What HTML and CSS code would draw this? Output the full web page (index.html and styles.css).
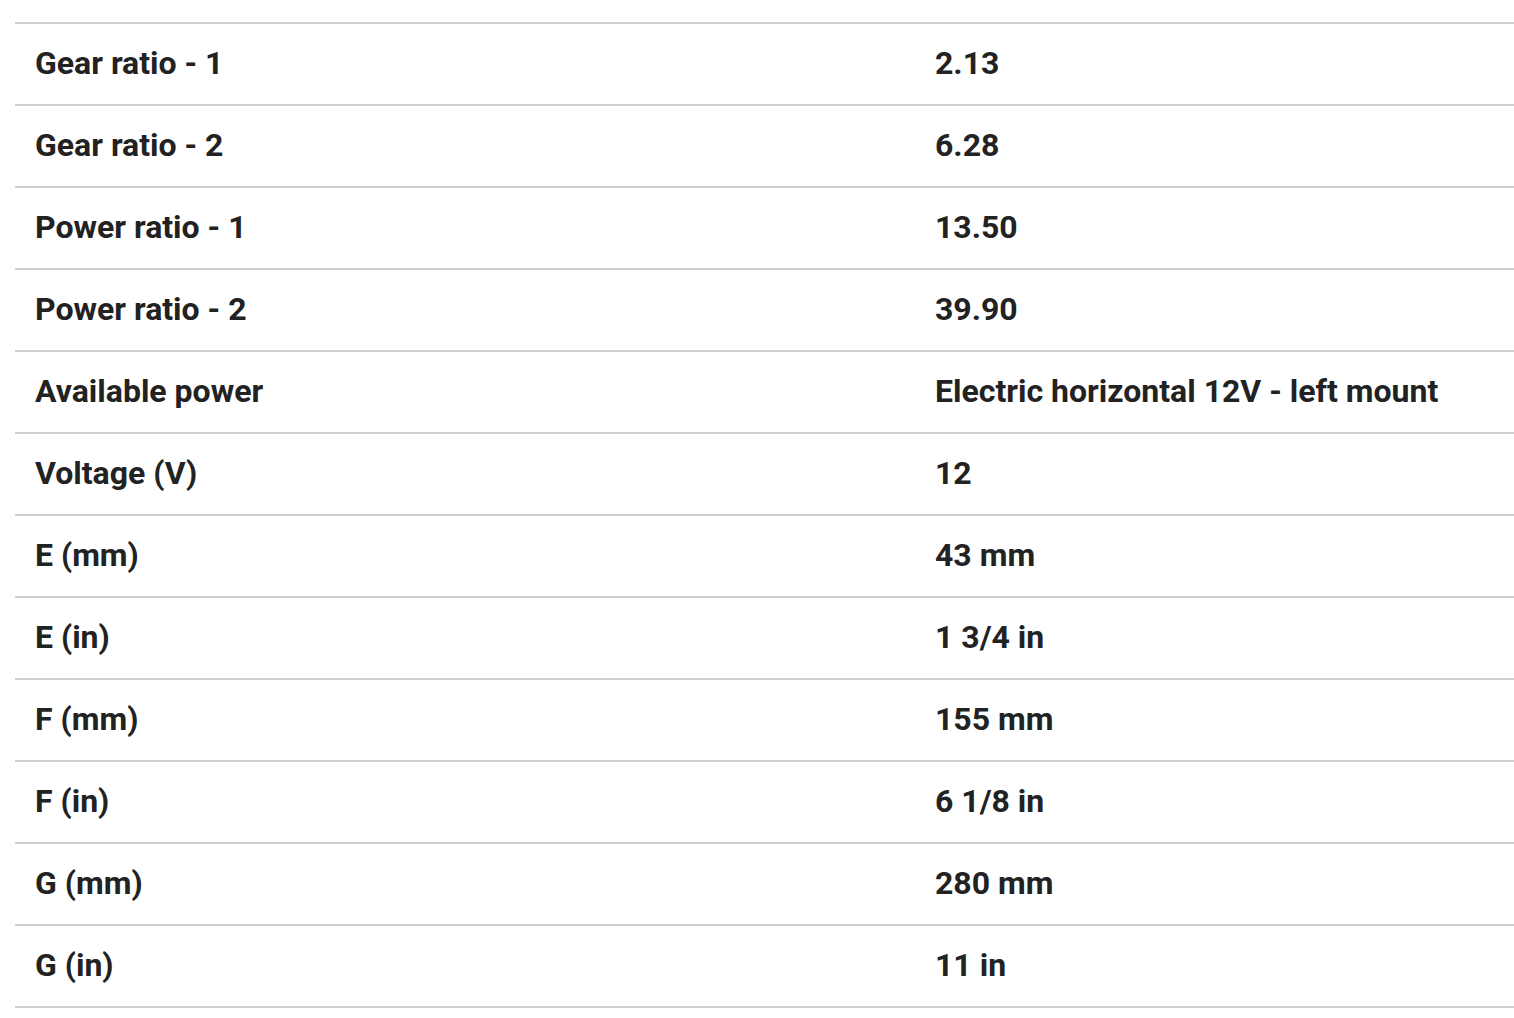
FILE: index.html
```html
<!DOCTYPE html>
<html>
<head>
<meta charset="utf-8">
<link rel="stylesheet" href="styles.css">
</head>
<body>
<table class="specs">
<tbody>
<tr><td class="label">Gear ratio - 1</td><td class="value">2.13</td></tr>
<tr><td class="label">Gear ratio - 2</td><td class="value">6.28</td></tr>
<tr><td class="label">Power ratio - 1</td><td class="value">13.50</td></tr>
<tr><td class="label">Power ratio - 2</td><td class="value">39.90</td></tr>
<tr><td class="label">Available power</td><td class="value">Electric horizontal 12V - left mount</td></tr>
<tr><td class="label">Voltage (V)</td><td class="value">12</td></tr>
<tr><td class="label">E (mm)</td><td class="value">43 mm</td></tr>
<tr><td class="label">E (in)</td><td class="value">1 3/4 in</td></tr>
<tr><td class="label">F (mm)</td><td class="value">155 mm</td></tr>
<tr><td class="label">F (in)</td><td class="value">6 1/8 in</td></tr>
<tr><td class="label">G (mm)</td><td class="value">280 mm</td></tr>
<tr><td class="label">G (in)</td><td class="value">11 in</td></tr>
</tbody>
</table>
</body>
</html>
```
FILE: styles.css
```css
html, body {
  margin: 0;
  padding: 0;
  background: #fff;
}
body {
  padding: 22px 0 0 15px;
  font-family: Roboto, "Liberation Sans", sans-serif;
}
.specs {
  width: 1499px;
  border-collapse: collapse;
  table-layout: fixed;
  border-top: 2px solid #cfcfcf;
}
.specs td {
  height: 82px;
  padding: 0 20px 2px;
  border-bottom: 2px solid #cfcfcf;
  font-size: 32px;
  font-weight: 700;
  color: #222;
  vertical-align: middle;
  box-sizing: border-box;
}
.specs td.label {
  width: 900px;
}
```
